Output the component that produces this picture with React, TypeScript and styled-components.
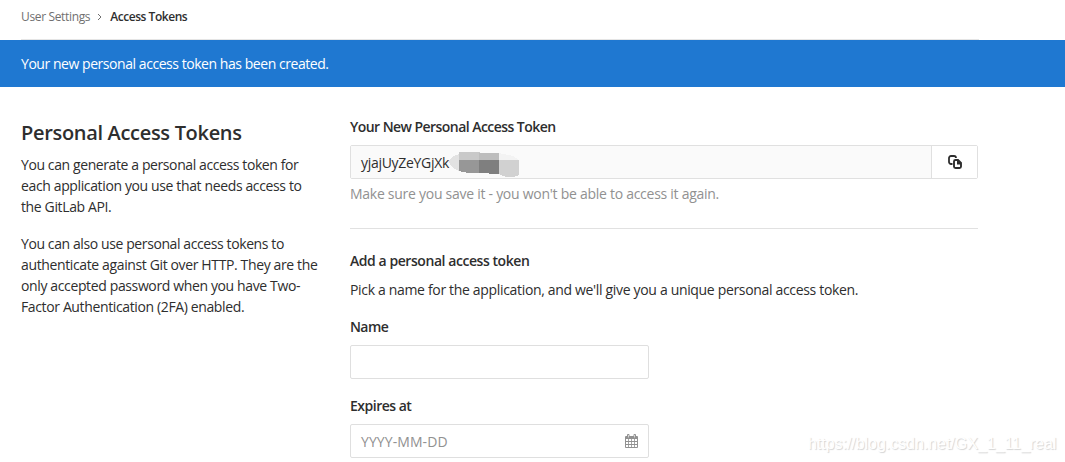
import React from "react";
import styled, { createGlobalStyle } from "styled-components";

const GlobalStyle = createGlobalStyle`
  * {
    box-sizing: border-box;
  }

  body {
    margin: 0;
    background: #fff;
    color: #2e2e2e;
    font-family: "Open Sans", "Noto Sans", sans-serif;
    font-size: 14px;
    line-height: 21px;
    overflow: hidden;
  }
`;

interface TextProps {
  $spacing?: number;
}

const Page = styled.div`
  position: relative;
  height: 462px;
  overflow: hidden;
`;

const Breadcrumbs = styled.nav`
  display: flex;
  align-items: center;
  width: 958px;
  height: 40px;
  margin-left: 21px;
  padding-bottom: 6px;
  border-bottom: 1px solid #e5e5e5;
  font-size: 12px;
`;

const BreadcrumbLink = styled.a<TextProps>`
  color: #707070;
  letter-spacing: ${(props) => props.$spacing ?? 0}px;
`;

const BreadcrumbCurrent = styled(BreadcrumbLink)`
  color: #2e2e2e;
  font-weight: 600;
`;

const Chevron = styled.svg`
  width: 5px;
  height: 8px;
  margin: 0 8px 0 7px;
`;

const Alert = styled.div`
  height: 47px;
  padding: 13px 21px;
  background: #1f78d1;
  color: #fff;
`;

const Content = styled.main`
  display: flex;
  padding: 30px 0 0 21px;
`;

const Sidebar = styled.section`
  width: 329px;
  flex: none;
`;

const Title = styled.h4`
  margin: 0 0 7px;
  padding-top: 2px;
  font-size: 20px;
  line-height: 28px;
  font-weight: 600;
`;

const Line = styled.span<TextProps>`
  display: block;
  width: max-content;
  white-space: nowrap;
  letter-spacing: ${(props) => props.$spacing ?? -0.37}px;
`;

const Paragraph = styled.p`
  margin: 0 0 16px;
`;

const Main = styled.section`
  width: 628px;
  flex: none;
  margin-top: -1px;
`;

const Label = styled.h5`
  margin: 0 0 8px;
  font-size: 14px;
  line-height: 21px;
  font-weight: 600;
`;

const TokenGroup = styled.div`
  display: flex;
  height: 34px;
  border: 1px solid #e0e0e0;
  border-radius: 2px;
`;

const TokenValue = styled.div`
  display: flex;
  align-items: center;
  flex: 1;
  padding-left: 10px;
  background: #fafafa;
`;

const Censored = styled.svg`
  width: 74px;
  height: 28px;
  margin: 2px 0 0 -1px;
`;

const CopyButton = styled.button`
  display: flex;
  align-items: center;
  justify-content: center;
  width: 46px;
  padding: 0;
  border: 0;
  border-left: 1px solid #e0e0e0;
  background: #fff;
`;

const Hint = styled.div`
  margin-top: 4px;
  color: #919191;
`;

const Divider = styled.hr`
  margin: 24px 0 21px;
  border: 0;
  border-top: 1px solid #e1e1e1;
`;

const Field = styled.div`
  display: flex;
  align-items: center;
  justify-content: space-between;
  width: 299px;
  height: 34px;
  margin-bottom: 16px;
  padding: 0 10px;
  border: 1px solid #dfdfdf;
  border-radius: 2px;
  color: #919191;
`;

const CalendarIcon = styled.svg`
  width: 13px;
  height: 14px;
`;

const Watermark = styled.div`
  position: absolute;
  left: 808px;
  top: 434px;
  color: #fff;
  font-family: "Liberation Sans", sans-serif;
  font-size: 16px;
  line-height: 20px;
  letter-spacing: -0.04px;
  white-space: nowrap;
  text-shadow: 1px 1px 1px #d4d4d4;
`;

const App: React.FC = () => {
  return (
    <>
      <GlobalStyle />
      <Page>
        <Breadcrumbs>
          <BreadcrumbLink $spacing={-0.35}>User Settings</BreadcrumbLink>
          <Chevron viewBox="0 0 5 8" fill="none" stroke="#707070">
            <path d="M1 1l3 3-3 3" />
          </Chevron>
          <BreadcrumbCurrent $spacing={-0.45}>Access Tokens</BreadcrumbCurrent>
        </Breadcrumbs>
        <Alert>
          <Line $spacing={-0.45}>
            Your new personal access token has been created.
          </Line>
        </Alert>
        <Content>
          <Sidebar>
            <Title>
              <Line $spacing={-0.32}>Personal Access Tokens</Line>
            </Title>
            <Paragraph>
              <Line $spacing={-0.4}>
                You can generate a personal access token for
              </Line>
              <Line>each application you use that needs access to</Line>
              <Line>the GitLab API.</Line>
            </Paragraph>
            <Paragraph>
              <Line $spacing={-0.4}>
                You can also use personal access tokens to
              </Line>
              <Line>authenticate against Git over HTTP. They are the</Line>
              <Line>only accepted password when you have Two-</Line>
              <Line>Factor Authentication (2FA) enabled.</Line>
            </Paragraph>
          </Sidebar>
          <Main>
            <Label>
              <Line $spacing={-0.55}>Your New Personal Access Token</Line>
            </Label>
            <TokenGroup>
              <TokenValue>
                <Line $spacing={-0.3}>yjajUyZeYGjXk</Line>
                <Censored viewBox="0 0 74 28" shapeRendering="crispEdges">
                  <path d="M0 12l4-4 7-3v17l-6-3z" fill="#e2e2e2" />
                  <path d="M11 3h21v8H11z" fill="#c9c9c9" />
                  <path d="M31 4h20v7H31z" fill="#bdbdbd" />
                  <path d="M51 4l14 3 6 4H51z" fill="#f3f3f3" />
                  <path d="M11 11h20v13H20l-9-2z" fill="#979797" />
                  <path d="M31 11h20v14l-20-1z" fill="#7f7f7f" />
                  <path d="M51 11h20v15l-5 2h-8l-7-3z" fill="#d1d1d1" />
                </Censored>
              </TokenValue>
              <CopyButton>
                <svg width="14" height="14" viewBox="0 0 14 14" fill="none">
                  <path
                    d="M4.500 9H3a2 2 0 0 1-2-2V3a2 2 0 0 1 2-2h3a2 2 0 0 1 2 2"
                    stroke="#2e2e2e"
                    strokeWidth="1.8"
                  />
                  <path
                    d="M7.500 5H10L13 8V11.500A1.500 1.500 0 0 1 11.500 13H7.500A1.500 1.500 0 0 1 6 11.500V6.500A1.500 1.500 0 0 1 7.500 5z"
                    stroke="#2e2e2e"
                    strokeWidth="1.9"
                  />
                  <path d="M9 5h1l3 3v1.500H9z" fill="#2e2e2e" />
                </svg>
              </CopyButton>
            </TokenGroup>
            <Hint>
              <Line $spacing={-0.27}>
                Make sure you save it - you won't be able to access it again.
              </Line>
            </Hint>
            <Divider />
            <Label>
              <Line $spacing={-0.44}>Add a personal access token</Line>
            </Label>
            <Paragraph>
              <Line $spacing={-0.33}>
                Pick a name for the application, and we'll give you a unique
                personal access token.
              </Line>
            </Paragraph>
            <Label>
              <Line $spacing={-0.6}>Name</Line>
            </Label>
            <Field />
            <Label>
              <Line $spacing={-0.5}>Expires at</Line>
            </Label>
            <Field>
              <Line $spacing={0.08}>YYYY-MM-DD</Line>
              <CalendarIcon viewBox="0 0 13 14">
                <path
                  fill="#919191"
                  fillRule="evenodd"
                  d="M1 2h1V1a1 1 0 0 1 1-1h.5a1 1 0 0 1 1 1v1h4V1a1 1 0 0 1 1-1h.5a1 1 0 0 1 1 1v1h1a1 1 0 0 1 1 1v10a1 1 0 0 1-1 1H1a1 1 0 0 1-1-1V3a1 1 0 0 1 1-1zM3 1v2.500h.6V1zM9.400 1v2.500H10V1zM1 5v2h2.200V5zM4 5v2h2.200V5zM7 5v2h2.200V5zM10 5v2h2V5zM1 8v2h2.200V8zM4 8v2h2.200V8zM7 8v2h2.200V8zM10 8v2h2V8zM1 11v2h2.200v-2zM4 11v2h2.200v-2zM7 11v2h2.200v-2zM10 11v2h2v-2z"
                />
              </CalendarIcon>
            </Field>
          </Main>
        </Content>
        <Watermark>https://blog.csdn.net/GX_1_11_real</Watermark>
      </Page>
    </>
  );
};

export default App;
